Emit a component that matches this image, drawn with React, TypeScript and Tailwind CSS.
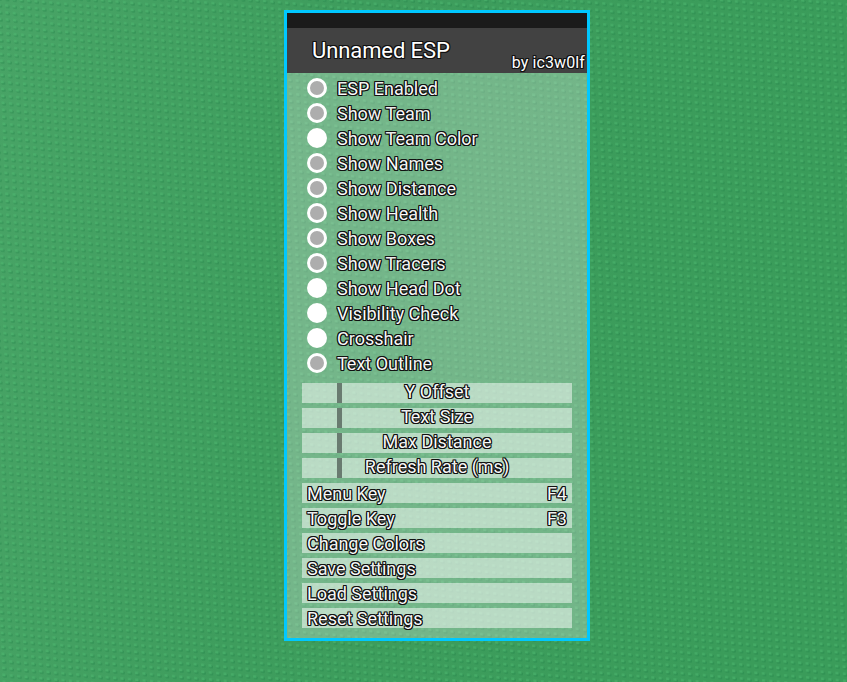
const outline =
  "[text-shadow:-1px_-1px_0_#111,0_-1px_0_#111,1px_-1px_0_#111,-1px_0_0_#111,1px_0_0_#111,-1px_1px_0_#111,0_1px_0_#111,1px_1px_0_#111]";

const itemText = `${outline} text-white [-webkit-text-stroke:0.25px_rgba(20,20,20,0.3)]`;

const toggles = [
  { label: "ESP Enabled", on: true },
  { label: "Show Team", on: true },
  { label: "Show Team Color", on: false },
  { label: "Show Names", on: true },
  { label: "Show Distance", on: true },
  { label: "Show Health", on: true },
  { label: "Show Boxes", on: true },
  { label: "Show Tracers", on: true },
  { label: "Show Head Dot", on: false },
  { label: "Visibility Check", on: false },
  { label: "Crosshair", on: false },
  { label: "Text Outline", on: true },
];

const sliders = ["Y Offset", "Text Size", "Max Distance", "Refresh Rate (ms)"];

const buttons = [
  { label: "Menu Key", value: "F4" },
  { label: "Toggle Key", value: "F3" },
  { label: "Change Colors", value: "" },
  { label: "Save Settings", value: "" },
  { label: "Load Settings", value: "" },
  { label: "Reset Settings", value: "" },
];

function Baseplate() {
  return (
    <svg className="absolute inset-0" width="847" height="682" aria-hidden="true">
      <defs>
        <linearGradient id="grass" x1="0" y1="0" x2="1" y2="0.15">
          <stop offset="0" stopColor="#48a466" />
          <stop offset="0.4" stopColor="#3e9d5d" />
          <stop offset="1" stopColor="#3a9c5a" />
        </linearGradient>
        <pattern id="studs" width="7.4" height="7" patternUnits="userSpaceOnUse" patternTransform="matrix(1 0.09 0.04 1 3 2)">
          <path d="M2 4.6h3.2v-2l1 .8v2.200H3z" fill="#187840" opacity="0.42" />
          <rect x="2" y="2" width="3" height="2.700" fill="#4fbd74" opacity="0.45" />
        </pattern>
      </defs>
      <rect width="847" height="682" fill="url(#grass)" />
      <rect width="847" height="682" fill="url(#studs)" />
    </svg>
  );
}

export default function App() {
  return (
    <main className="relative h-[682px] w-[847px] overflow-hidden bg-[#3c9b5b] pl-[284px] pt-[10px] font-['Roboto',sans-serif] text-white">
      <Baseplate />
      <section className="relative h-[631px] w-[306px] border-[3px] border-[#00c8ff] bg-[#f0f0f0]/31">
        <div className="h-[15px] bg-[#1b1b1b]" />
        <header className="flex h-[45px] justify-between bg-[#424242] pl-[25px] pr-[2px]">
          <h1 className={`pt-[7px] text-[22px] leading-[32px] tracking-[-0.1px] ${outline}`}>Unnamed ESP</h1>
          <span className={`pt-[25px] text-[16px] leading-[20px] tracking-[0.1px] ${outline}`}>by ic3w0lf</span>
        </header>
        <div className="flex flex-col gap-[5px] px-[15px] pt-[5px] text-[18px] leading-[20px]">
          {toggles.map((t) => (
            <div key={t.label} className="flex h-5 items-center gap-[10px] pl-[5px]">
              <span className={`size-5 rounded-full border-[3px] border-white ${t.on ? "bg-[#adadad]" : "bg-white"}`} />
              <span className={`whitespace-nowrap pt-px ${itemText}`}>{t.label}</span>
            </div>
          ))}
          <div className="mt-[5px] flex flex-col gap-[5px]">
            {sliders.map((label) => (
              <div key={label} className="relative h-5 bg-white/50 text-center">
                <span className="absolute left-[35px] top-0 h-5 w-[5px] bg-[#697b70]" />
                <span className={`relative block -translate-y-px whitespace-nowrap ${itemText}`}>{label}</span>
              </div>
            ))}
          </div>
          {buttons.map((b) => (
            <div key={b.label} className="flex h-5 justify-between bg-white/50 px-[5px] pt-px">
              <span className={itemText}>{b.label}</span>
              <span className={itemText}>{b.value}</span>
            </div>
          ))}
        </div>
      </section>
    </main>
  );
}
